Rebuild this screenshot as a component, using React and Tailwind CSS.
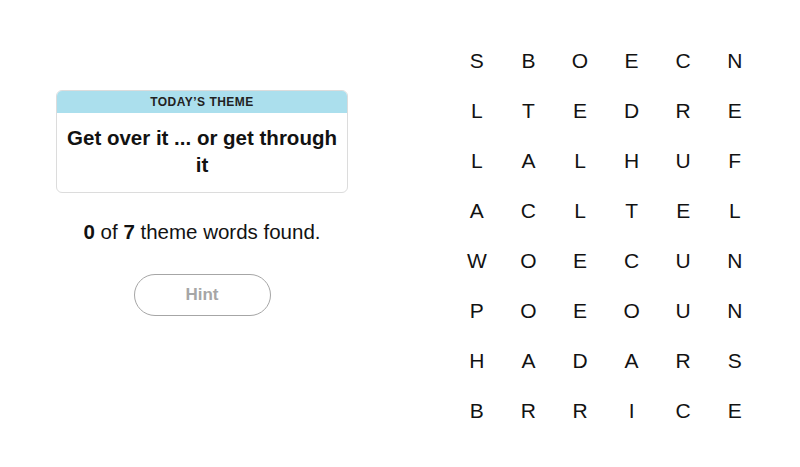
const grid = [
  ['S', 'B', 'O', 'E', 'C', 'N'],
  ['L', 'T', 'E', 'D', 'R', 'E'],
  ['L', 'A', 'L', 'H', 'U', 'F'],
  ['A', 'C', 'L', 'T', 'E', 'L'],
  ['W', 'O', 'E', 'C', 'U', 'N'],
  ['P', 'O', 'E', 'O', 'U', 'N'],
  ['H', 'A', 'D', 'A', 'R', 'S'],
  ['B', 'R', 'R', 'I', 'C', 'E'],
];

export default function App() {
  return (
    <div className="flex h-[467px] w-[800px] bg-white text-black" style={{ fontFamily: '"Liberation Sans", Arial, sans-serif' }}>
      <div className="flex w-[404px] flex-col items-center pt-[90px]">
        <div className="w-[292px] overflow-hidden rounded-[6px] border border-[#dcdcdc]">
          <div className="bg-[#abdfed] py-[3px] text-center text-[12px] font-bold uppercase leading-[16px] tracking-[0.04em] text-[#222]">
            Today’s Theme
          </div>
          <div className="px-1 pt-[11px] pb-[14px] text-center text-[20.5px] font-bold leading-[27px] text-[#121212]">
            Get over it ... or get through it
          </div>
        </div>
        <p className="mt-[27px] text-[20.5px] leading-[24px] text-[#121212]">
          <span className="font-bold">0</span> of <span className="font-bold">7</span> theme words found.
        </p>
        <button className="mt-[30px] h-[42px] w-[137px] rounded-full border border-[#a6a6a6] text-[17px] font-bold text-[#a6a6a6]">
          Hint
        </button>
      </div>
      <div className="pt-[35px] pl-[47px]">
        <div className="grid grid-cols-[repeat(6,51.6px)] auto-rows-[50px]">
          {grid.flat().map((ch, i) => (
            <div key={i} className="flex items-center justify-center text-[21px] leading-none text-[#121212]">
              {ch}
            </div>
          ))}
        </div>
      </div>
    </div>
  );
}
